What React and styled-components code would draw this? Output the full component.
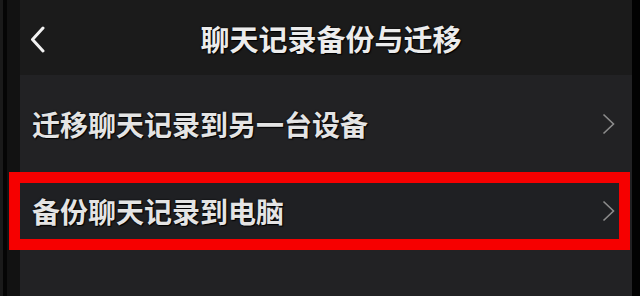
import React from 'react'
import styled, { createGlobalStyle } from 'styled-components';

const GlobalStyle = createGlobalStyle`
html, body {
  margin: 0;
  padding: 0;
  background: #000;
}
body {
  font-family: 'Noto Sans CJK SC', 'Noto Sans', sans-serif;
}
`

export const Screen = styled.div`
display: flex;
width: 640px;
height: 296px;
overflow: hidden;
background: #000;
`

export const LeftEdge = styled.div`
width: 20px;
flex-shrink: 0;
background: linear-gradient(90deg, #1a1a1a 0, #1a1a1a 3px, #050505 3px, #050505 7px, #121212 7px);
`

export const RightEdge = styled.div`
width: 8px;
flex-shrink: 0;
background: #020202;
`

export const Panel = styled.div`
flex: 1;
display: flex;
flex-direction: column;
`

export const Header = styled.header`
height: 75px;
display: flex;
align-items: center;
justify-content: center;
position: relative;
background: #1b1b1b;
flex-shrink: 0;
`

export const BackButton = styled.div`
position: absolute;
left: 10px;
top: 26px;
width: 15px;
height: 27px;
`

export const Title = styled.h1`
margin: 0 0 0 10px;
font-size: 29px;
font-weight: 700;
color: #ececec;
letter-spacing: 0;
text-shadow: 0 0 2px #000, 1px 1px 1px #000;
`

export const List = styled.div`
flex: 1;
background: #222224;
display: flex;
flex-direction: column;
`

export const Row = styled.div`
display: flex;
align-items: center;
justify-content: space-between;
height: ${(props) => props.Height};
box-sizing: border-box;
padding: ${(props) => (props.Highlight ? '0 4px 0 12px' : '0 17px 0 12px')};
margin: ${(props) => (props.Highlight ? '-1px 2px 0 -11px' : '0')};
border: ${(props) => (props.Highlight ? '11px solid #f60000' : 'none')};
border-top-width: ${(props) => (props.Highlight ? '11px' : '0')};
border-bottom-width: ${(props) => (props.Highlight ? '11px' : '0')};
background: ${(props) => (props.Highlight ? '#1f2023' : 'transparent')};
`

export const Label = styled.span`
font-size: 28px;
font-weight: 700;
color: #e4e4e4;
text-shadow: 0 0 2px #000, 1px 1px 1px #000;
line-height: 1;
`

const Chevron = () => (
    <svg width="13" height="22" viewBox="0 0 13 22">
        <polyline points="1.5,1.5 11.5,11 1.5,20.5" fill="none" stroke="#8c8c8c" strokeWidth="1.6" />
    </svg>
)

const Back = () => (
    <svg width="15" height="27" viewBox="0 0 15 27">
        <polyline points="13,2 2.5,13.5 13,25" fill="none" stroke="#f2f2f2" strokeWidth="3" strokeLinecap="round" strokeLinejoin="round" />
    </svg>
)

export default function App() {
    return (
        <Screen>
            <GlobalStyle />
            <LeftEdge />
            <Panel>
                <Header>
                    <BackButton><Back /></BackButton>
                    <Title>聊天记录备份与迁移</Title>
                </Header>
                <List>
                    <Row Height="98px">
                        <Label>迁移聊天记录到另一台设备</Label>
                        <Chevron />
                    </Row>
                    <Row Height="78px" Highlight>
                        <Label>备份聊天记录到电脑</Label>
                        <Chevron />
                    </Row>
                </List>
            </Panel>
            <RightEdge />
        </Screen>
    )
}
